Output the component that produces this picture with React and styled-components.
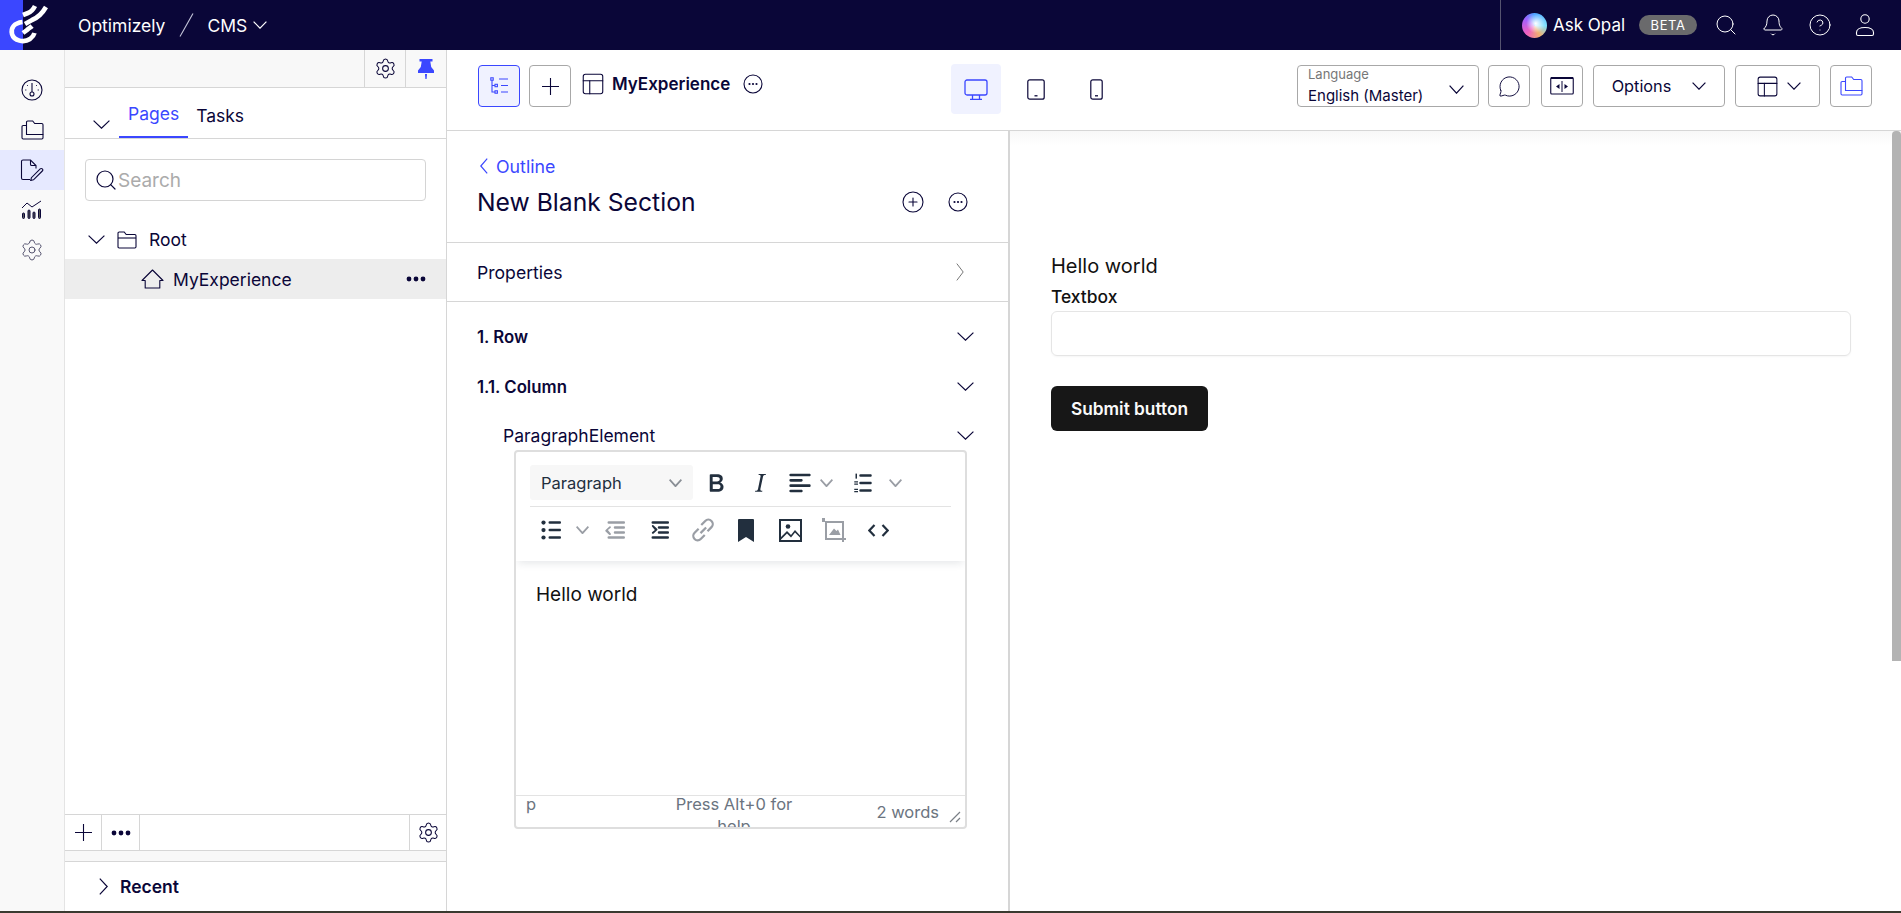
import React from 'react'
import styled, { createGlobalStyle } from 'styled-components'
import {
  Search, Bell, CircleHelp, Settings, MessageCircle, PanelsTopLeft, CirclePlus,
} from 'lucide-react'

const GlobalStyle = createGlobalStyle`
  html, body { margin: 0; padding: 0; height: 100%; overflow: hidden; background: #fff; }
  body { font-family: Inter, "Noto Sans", sans-serif; color: #0a0638; }
  * { box-sizing: border-box; }
`

const ink = '#0a0638'
const blue = '#3b47ff'
const line = '#d6d6d6'

const Page = styled.div`
  width: 1901px;
  height: 913px;
  display: flex;
  flex-direction: column;
  overflow: hidden;
  border-bottom: 2px solid #3a3a30;
`
const TopBar = styled.header`
  height: 50px;
  flex: none;
  background: ${ink};
  color: #fff;
  display: flex;
  align-items: center;
`
const LogoBox = styled.div`
  width: 78px;
  height: 50px;
  flex: none;
`
const BrandName = styled.span`
  font-size: 17.5px;
`
const Slash = styled.span`
  width: 42px;
  height: 50px;
  flex: none;
  display: flex;
  align-items: center;
  justify-content: center;
`
const Product = styled.span`
  font-size: 17.5px;
  display: flex;
  align-items: center;
  gap: 6px;
`
const TopRight = styled.div`
  margin-left: auto;
  height: 50px;
  width: 401px;
  border-left: 1px solid #55536f;
  padding-left: 21px;
  display: flex;
  align-items: center;
`
const Orb = styled.span`
  width: 25px;
  height: 25px;
  border-radius: 50%;
  background:
    radial-gradient(circle at 55% 42%, #fff 0, rgba(255, 255, 255, 0) 48%),
    conic-gradient(#4aa3ff, #7fe0ff 25%, #f0b070 42%, #f060c0 62%, #a060ff 85%, #4aa3ff);
`
const OpalLabel = styled.span`
  font-size: 17px;
  margin-left: 6px;
`
const Beta = styled.span`
  margin-left: 14px;
  width: 58px;
  height: 20px;
  border-radius: 10px;
  background: #6a6a6c;
  font-size: 13px;
  letter-spacing: 0.6px;
  display: flex;
  align-items: center;
  justify-content: center;
`
const TopIcons = styled.div`
  margin-left: 17px;
  display: flex;
  gap: 23px;
  align-items: center;
`
const Body = styled.div`
  flex: 1;
  min-height: 0;
  display: flex;
`
const Rail = styled.nav`
  width: 65px;
  flex: none;
  background: #f9f9f9;
  border-right: 1px solid #e4e4e4;
  padding-top: 20px;
  display: flex;
  flex-direction: column;
`
const RailItem = styled.div`
  height: 40px;
  display: flex;
  align-items: center;
  justify-content: center;
  background: ${p => (p.$active ? '#e6e9ff' : 'transparent')};
`
const TreePanel = styled.aside`
  width: 382px;
  flex: none;
  border-right: 1px solid ${line};
  display: flex;
  flex-direction: column;
`
const TreeHead = styled.div`
  height: 38px;
  flex: none;
  background: #f8f8f8;
  border-bottom: 1px solid ${line};
  display: flex;
  justify-content: flex-end;
`
const HeadCell = styled.div`
  width: 41px;
  border-left: 1px solid ${line};
  display: flex;
  align-items: center;
  justify-content: center;
`
const Tabs = styled.div`
  height: 51px;
  flex: none;
  border-bottom: 1px solid ${line};
  padding-left: 27px;
  display: flex;
  align-items: flex-end;
`
const TabChevron = styled.span`
  width: 27px;
  height: 50px;
  padding-top: 25px;
  padding-left: 1px;
`
const Tab = styled.div`
  padding: 0 ${p => (p.$active ? '9px' : '8px')};
  height: 50px;
  font-size: 17.5px;
  line-height: ${p => (p.$active ? '52px' : '56px')};
  color: ${p => (p.$active ? blue : ink)};
  border-bottom: ${p => (p.$active ? `2px solid ${blue}` : '0')};
`
const SearchBox = styled.div`
  margin: 20px 20px 0;
  height: 42px;
  border: 1px solid #d4d4d4;
  border-radius: 4px;
  display: flex;
  align-items: center;
  padding-left: 8px;
  color: #ababab;
  font-size: 19px;
  flex: none;
`
const RootRow = styled.div`
  height: 39px;
  margin-top: 19px;
  padding-left: 23px;
  display: flex;
  align-items: center;
  font-size: 17.5px;
  flex: none;
  gap: 12px;
`
const PageRow = styled.div`
  height: 40px;
  background: #ededed;
  padding: 0 20px 0 76px;
  display: flex;
  align-items: center;
  font-size: 17.5px;
  flex: none;
  gap: 9px;
`
const MoreDots = styled.span`
  margin-left: auto;
  display: flex;
`
const TreeFill = styled.div`
  flex: 1;
`
const TreeFoot = styled.div`
  height: 37px;
  flex: none;
  border-top: 1px solid ${line};
  border-bottom: 1px solid ${line};
  display: flex;
`
const FootCell = styled.div`
  width: ${p => (p.$wide ? '38px' : '37px')};
  border-right: ${p => (p.$end ? '0' : `1px solid ${line}`)};
  border-left: ${p => (p.$end ? `1px solid ${line}` : '0')};
  margin-left: ${p => (p.$end ? 'auto' : '0')};
  display: flex;
  align-items: center;
  justify-content: center;
`
const GreyStrip = styled.div`
  height: 11px;
  flex: none;
  background: #f8f8f8;
  border-bottom: 1px solid ${line};
`
const RecentRow = styled.div`
  height: 49px;
  flex: none;
  padding-left: 34px;
  display: flex;
  align-items: center;
  gap: 12px;
  font-size: 17.5px;
  font-weight: 600;
`
const Main = styled.main`
  flex: 1;
  min-width: 0;
  display: flex;
  flex-direction: column;
`
const ToolBar = styled.div`
  height: 81px;
  flex: none;
  border-bottom: 1px solid ${line};
  display: flex;
  padding: 15px 0 0 31px;
`
const ToolButton = styled.button`
  width: ${p => p.$w || 42}px;
  height: 42px;
  flex: none;
  margin-right: ${p => p.$gap ?? 0}px;
  background: ${p => (p.$active ? '#f0f2ff' : '#fff')};
  border: 1px solid ${p => (p.$active ? blue : '#a8a8a8')};
  border-radius: 4px;
  color: ${ink};
  font: 16.3px Inter, sans-serif;
  display: flex;
  align-items: center;
  justify-content: center;
  gap: ${p => p.$inner || 0}px;
  padding: 0;
`
const ExperienceName = styled.div`
  height: 42px;
  margin-left: 9px;
  width: 371px;
  flex: none;
  padding-bottom: 5px;
  display: flex;
  align-items: center;
  font-size: 17px;
  font-weight: 600;
  gap: 6px;
`
const NameDots = styled.span`
  display: flex;
  margin-left: 7px;
`
const DeviceTabs = styled.div`
  display: flex;
  margin-top: -1px;
  width: 346px;
  flex: none;
`
const DeviceTab = styled.div`
  width: 50px;
  height: 50px;
  margin-right: 10px;
  border-radius: 4px;
  background: ${p => (p.$active ? '#f0f2ff' : 'transparent')};
  display: flex;
  align-items: center;
  justify-content: center;
`
const LanguageBox = styled.div`
  width: 182px;
  height: 42px;
  flex: none;
  margin-right: 9px;
  border: 1px solid #a8a8a8;
  border-radius: 4px;
  padding: 0 10px;
  position: relative;
`
const LanguageLabel = styled.div`
  font-size: 13px;
  line-height: 14px;
  color: #777;
  margin-top: 1px;
`
const LanguageValue = styled.div`
  font-size: 15px;
  line-height: 19px;
  margin-top: 5px;
`
const LanguageChevron = styled.span`
  position: absolute;
  right: 14px;
  top: 19px;
  display: flex;
`
const Split = styled.div`
  flex: 1;
  min-height: 0;
  display: flex;
`
const OutlinePanel = styled.section`
  width: 563px;
  flex: none;
  border-right: 2px solid ${line};
`
const OutlineHead = styled.div`
  height: 112px;
  border-bottom: 1px solid ${line};
  padding: 24px 40px 0 30px;
`
const BackLink = styled.div`
  display: flex;
  align-items: center;
  color: ${blue};
  font-size: 17.8px;
  margin-left: 3px;
  gap: 8px;
  height: 22px;
`
const TitleRow = styled.div`
  display: flex;
  align-items: center;
  margin-top: 10px;
  gap: 23px;
  font-size: 24.7px;
  font-weight: 400;
`
const TitleText = styled.h1`
  font: inherit;
  margin: 0 auto 0 0;
`
const PropertiesRow = styled.div`
  height: 59px;
  border-bottom: 1px solid ${line};
  padding: 0 44px 0 30px;
  font-size: 17.6px;
  display: flex;
  align-items: center;
  justify-content: space-between;
`
const FoldRow = styled.div`
  height: ${p => p.$h || 49}px;
  padding: 0 34px 0 ${p => p.$indent || 30}px;
  font-size: ${p => (p.$bold ? '16.8px' : '17.5px')};
  font-weight: ${p => (p.$bold ? 600 : 400)};
  display: flex;
  align-items: center;
  justify-content: space-between;
`
const RowStack = styled.div`
  padding-top: 9px;
`
const Editor = styled.div`
  margin: -10px 0 0 67px;
  width: 453px;
  height: 379px;
  border: 2px solid #dedede;
  border-radius: 4px;
  display: flex;
  flex-direction: column;
  overflow: hidden;
`
const EditorHeader = styled.div`
  height: 109px;
  flex: none;
  padding: 13px 14px 0 14px;
  box-shadow: 0 4px 8px -2px rgba(34, 47, 62, 0.12);
`
const EditorRow = styled.div`
  height: ${p => (p.$first ? '42px' : '46px')};
  display: flex;
  align-items: ${p => (p.$first ? 'flex-start' : 'center')};
  border-bottom: ${p => (p.$first ? '1px solid #e3e3e3' : '0')};
`
const BlockSelect = styled.div`
  width: 163px;
  height: 35px;
  flex: none;
  background: #f7f7f7;
  border-radius: 3px;
  margin-right: 1px;
  padding: 0 11px;
  display: flex;
  align-items: center;
  justify-content: space-between;
  color: #222f3e;
  font-size: 16.5px;
`
const Tool = styled.span`
  width: ${p => p.$w || 44}px;
  margin-left: ${p => p.$ml || 0}px;
  height: ${p => (p.$mid ? '35px' : '36px')};
  flex: none;
  display: flex;
  align-items: center;
  justify-content: center;
  color: ${p => (p.$dim ? '#9a9ea5' : '#222f3e')};
`
const EditArea = styled.div`
  flex: 1;
  padding: 21px 20px 0;
  font-size: 19px;
  line-height: 26px;
  color: #111;
`
const StatusBar = styled.div`
  height: 32px;
  flex: none;
  border-top: 1px solid #e3e3e3;
  display: grid;
  grid-template-columns: 147px 122px 1fr;
  color: #6b7480;
  font-size: 16.5px;
  overflow: hidden;
  padding-left: 10px;
  position: relative;
`
const StatusPath = styled.span`
  line-height: 16px;
`
const StatusHelp = styled.span`
  text-align: center;
  line-height: 22px;
  margin-top: -3px;
`
const StatusWords = styled.span`
  text-align: right;
  padding: 5px 26px 0 0;
  line-height: 22px;
`
const ResizeGrip = styled.svg`
  position: absolute;
  right: 4px;
  bottom: 4px;
`
const Preview = styled.section`
  flex: 1;
  min-width: 0;
  position: relative;
  padding: 123px 50px 0 41px;
  background: linear-gradient(#f8f8f8, #fff 14px);
  color: #111;
`
const PreviewText = styled.p`
  margin: 0;
  font-size: 20px;
  line-height: 24px;
`
const FieldLabel = styled.label`
  display: block;
  margin-top: 9px;
  font-size: 17.4px;
  font-weight: 500;
  line-height: 20px;
`
const TextBox = styled.div`
  margin-top: 4px;
  height: 45px;
  border: 1px solid #e5e5e5;
  border-radius: 6px;
  box-shadow: 0 1px 2px rgba(0, 0, 0, 0.04);
`
const SubmitButton = styled.button`
  margin-top: 30px;
  display: block;
  width: 157px;
  height: 45px;
  border: 0;
  border-radius: 6px;
  background: #171717;
  color: #fafafa;
  font: 600 17.3px Inter, sans-serif;
`
const ScrollThumb = styled.div`
  position: absolute;
  top: 0;
  right: 0;
  width: 9px;
  height: 530px;
  background: #b3b3b3;
  border-radius: 4px 4px 0 0;
`

const ChevDown = ({ w = 17, h = 9, color = ink, sw = 1.2 }) => (
  <svg width={w} height={h} viewBox={`0 0 ${w} ${h}`} fill="none" stroke={color} strokeWidth={sw} style={{ flex: 'none' }}>
    <path d={`M.6.6 ${w / 2} ${h - 0.8} ${w - 0.6}.6`} />
  </svg>
)
const ChevRight = ({ w = 9, h = 17, color = ink, sw = 1.2 }) => (
  <svg width={w} height={h} viewBox={`0 0 ${w} ${h}`} fill="none" stroke={color} strokeWidth={sw} style={{ flex: 'none' }}>
    <path d={`M.8.6 ${w - 0.8} ${h / 2} .8 ${h - 0.6}`} />
  </svg>
)
const ChevLeft = ({ w = 8, h = 16, color = blue, sw = 1.2 }) => (
  <svg width={w} height={h} viewBox={`0 0 ${w} ${h}`} fill="none" stroke={color} strokeWidth={sw} style={{ flex: 'none' }}>
    <path d={`M${w - 0.8}.6 .8 ${h / 2} ${w - 0.8} ${h - 0.6}`} />
  </svg>
)
const Cross = ({ size = 17, color = ink }) => (
  <svg width={size} height={size} viewBox={`0 0 ${size} ${size}`} stroke={color} strokeWidth="1.1">
    <path d={`M0 ${size / 2}H${size}M${size / 2} 0V${size}`} />
  </svg>
)

const DotsGlyph = () => (
  <svg width="20" height="6" viewBox="0 0 20 6"><circle cx="3" cy="3" r="2.4" fill={ink} /><circle cx="10" cy="3" r="2.4" fill={ink} /><circle cx="17" cy="3" r="2.4" fill={ink} /></svg>
)

const Logo = () => (
  <svg width="78" height="50" viewBox="0 0 78 50">
    <rect width="23" height="50" fill={blue} />
    <g fill="none" stroke="#fff" strokeWidth="4.6" strokeLinecap="butt">
      <path d="M22.5 22 C 14 23, 10.5 28, 12 34 C 14 41, 24 43, 30 39 C 32.5 37, 34 35, 34.5 33" />
      <path d="M23 15 L 28 13 C 31 12, 33 10, 35 6" />
      <path d="M25 24 L 32 20 C 37 18, 42 14, 46 7" />
      <path d="M23 33 L 27 30 C 29 28, 31 27, 32 26" />
    </g>
  </svg>
)

const CircleDots = () => (
  <svg width="20" height="20" viewBox="0 0 20 20" fill="none"><circle cx="10" cy="10" r="9" stroke={ink} strokeWidth="1.1" /><circle cx="6.5" cy="10" r="1.1" fill={ink} /><circle cx="10" cy="10" r="1.1" fill={ink} /><circle cx="13.5" cy="10" r="1.1" fill={ink} /></svg>
)
const UserIcon = () => (
  <svg width="20" height="24" viewBox="0 0 20 24" fill="none" stroke="#fff" strokeWidth="1.1"><circle cx="10" cy="6" r="4.2" /><path d="M3 22.5 h14 c1 0 1.5-.5 1.5-1.5 v-1.5 c0-3-3-5-8.5-5 s-8.5 2-8.5 5 v1.5 c0 1 .5 1.5 1.5 1.5z" /></svg>
)
const SplitIcon = () => (
  <svg width="24" height="18" viewBox="0 0 24 18" fill="none" stroke={ink}><rect x=".75" y="1" width="22.5" height="16" rx="1" strokeWidth="1.1" /><path d="M.7 1h22.6" strokeWidth="2" /><path d="M12 4v11" strokeWidth="1" /><path d="M9.5 6.9 6 9.5l3.5 2.6zM14.5 6.9 18 9.5l-3.5 2.6z" fill={ink} stroke="none" /></svg>
)
const ChartIcon = () => (
  <svg width="22" height="20" viewBox="0 0 22 20" fill="none" stroke={ink} strokeWidth="1"><path d="M1 8 6 3l5 4 9-6" /><rect x="1.5" y="13" width="2" height="5.5" rx="1" fill="#555" /><rect x="7" y="10" width="2" height="8.5" rx="1" fill="#555" /><rect x="12" y="12" width="2" height="6.5" rx="1" fill="#555" /><rect x="17.5" y="9" width="2" height="9.5" rx="1" fill="#555" /></svg>
)
const GaugeIcon = () => (
  <svg width="22" height="22" viewBox="0 0 22 22" fill="none" stroke={ink} strokeWidth="1.1">
    <circle cx="11" cy="11" r="10" />
    <path d="M11 4v9" />
    <circle cx="11" cy="15" r="2" />
    <path d="M4 11h1.4M16.6 11H18M6 6l1 1M16 6l-1 1" strokeWidth=".8" />
  </svg>
)
const FoldersIcon = ({ color = ink, w = 23, h = 20 }) => (
  <svg width={w} height={h} viewBox="0 0 23 20" fill="none" stroke={color} strokeWidth="1.1">
    <path d="M5.5 14.5V2.2c0-.7.5-1.2 1.2-1.2h5l2 2.5h7c.7 0 1.3.5 1.3 1.2v9.8z" />
    <path d="M5.5 5.5H2.2C1.5 5.5 1 6 1 6.7v11.1c0 .7.5 1.2 1.2 1.2h18.6c.7 0 1.2-.5 1.2-1.2v-3.3" />
  </svg>
)
const FilePencilIcon = () => (
  <svg width="24" height="22" viewBox="0 0 24 22" fill="none" stroke={ink} strokeWidth="1.1">
    <path d="M10 20.5H3A1.5 1.5 0 0 1 1.5 19V2.5A1.5 1.5 0 0 1 3 1h7.5L16 6.5v3" />
    <path d="M10.5 1v4.2c0 .7.6 1.3 1.3 1.3H16" />
    <path d="M13.5 20.8l-2.8.7.7-2.8 8.8-8.8a1.4 1.4 0 0 1 2.1 2.1z" />
  </svg>
)
const HomeIcon = () => (
  <svg width="23" height="20" viewBox="0 0 23 20" fill="none" stroke={ink} strokeWidth="1.1" strokeLinejoin="round">
    <path d="M11.5 1 1 11.5h3.2V19h14.6v-7.5H22z" />
  </svg>
)
const RootFolderIcon = () => (
  <svg width="20" height="18" viewBox="0 0 20 18" fill="none" stroke={ink} strokeWidth="1.1">
    <path d="M1 2.2C1 1.5 1.5 1 2.2 1h5l2 2.5h8.6c.7 0 1.2.5 1.2 1.2v11.1c0 .7-.5 1.2-1.2 1.2H2.2c-.7 0-1.2-.5-1.2-1.2z" />
    <path d="M1 7h18" />
  </svg>
)
const PinIcon = () => (
  <svg width="16" height="20" viewBox="0 0 16 20" fill={blue}>
    <path d="M1.5 0h13v2.4h-2.2l.9 5.6 2.8 3.6V14H0v-2.4L2.8 8l.9-5.6H1.5z" />
    <path d="M7 15h2l-.4 5H7.4z" />
  </svg>
)
const OutlineTreeIcon = () => (
  <svg width="19" height="18" viewBox="0 0 19 18" fill="none" stroke={blue} strokeWidth="1.1">
    <rect x=".8" y=".8" width="2.4" height="2.4" />
    <rect x="5" y="7.3" width="2.4" height="2.4" />
    <rect x="5" y="13.8" width="2.4" height="2.4" />
    <path d="M2 3.2V15h3M2 8.5h3" />
    <path d="M9 2h9M11 8.5h7M11 15h7" />
  </svg>
)
const MonitorIcon = () => (
  <svg width="24" height="21" viewBox="0 0 24 21" fill="none" stroke={blue} strokeWidth="1.3">
    <rect x="1" y="1" width="22" height="15" rx="2" />
    <path d="M8.5 16v4M15.5 16v4M6 20.3h12" />
  </svg>
)
const TabletIcon = () => (
  <svg width="18" height="21" viewBox="0 0 18 21" fill="none" stroke={ink} strokeWidth="1.2">
    <rect x=".8" y=".8" width="16.4" height="19.4" rx="2" />
    <path d="M7.5 16.8h3" strokeWidth="1.3" />
  </svg>
)
const PhoneIcon = () => (
  <svg width="13" height="21" viewBox="0 0 13 21" fill="none" stroke={ink} strokeWidth="1.2">
    <rect x=".8" y=".8" width="11.4" height="19.4" rx="2" />
    <path d="M5 16.8h3" strokeWidth="1.3" />
  </svg>
)

const BoldIcon = () => (
  <svg width="30" height="30" viewBox="0 0 24 24" fill="currentColor"><path d="M7.8 19c-.3 0-.5 0-.6-.2l-.2-.5V5.7c0-.2 0-.4.2-.5l.6-.2h5c1.5 0 2.7.3 3.5 1 .7.6 1.1 1.4 1.1 2.5a3 3 0 0 1-.6 1.9c-.4.6-1 1-1.6 1.2.4.1.9.3 1.3.6s.8.7 1 1.2c.4.4.5 1 .5 1.6 0 1.3-.4 2.3-1.3 3-.8.7-2.1 1-3.8 1H7.8zm5-8.3c.6 0 1.2-.1 1.6-.5.4-.3.6-.7.6-1.3 0-1.1-.8-1.7-2.4-1.7H9.3v3.5h3.4zm.5 6c.7 0 1.3-.1 1.7-.4.4-.4.6-.9.6-1.5s-.2-1-.7-1.4c-.4-.3-1-.4-2-.4H9.4v3.8h4z" /></svg>
)
const ItalicIcon = () => (
  <svg width="30" height="30" viewBox="0 0 24 24" fill="currentColor"><path d="M16.7 4.7l-.1.9h-.3c-.6 0-1 0-1.4.3-.3.3-.4.6-.5 1.1l-2.1 9.8v.6c0 .5.4.8 1.4.8h.2l-.2.8H8l.2-.8h.2c1.1 0 1.8-.5 2-1.5l2-9.8.1-.5c0-.6-.4-.8-1.4-.8h-.3l.2-.9h5.8z" /></svg>
)
const AlignIcon = () => (
  <svg width="32" height="32" viewBox="0 0 24 24" fill="currentColor"><path d="M5 5h14c.6 0 1 .4 1 1s-.4 1-1 1H5a1 1 0 1 1 0-2zm0 4h8c.6 0 1 .4 1 1s-.4 1-1 1H5a1 1 0 1 1 0-2zm0 8h8c.6 0 1 .4 1 1s-.4 1-1 1H5a1 1 0 0 1 0-2zm0-4h14c.6 0 1 .4 1 1s-.4 1-1 1H5a1 1 0 0 1 0-2z" /></svg>
)
const NumListIcon = () => (
  <svg width="30" height="30" viewBox="0 0 24 24" fill="currentColor"><path d="M10 17h8c.6 0 1 .4 1 1s-.4 1-1 1h-8a1 1 0 0 1 0-2zm0-6h8c.6 0 1 .4 1 1s-.4 1-1 1h-8a1 1 0 0 1 0-2zm0-6h8c.6 0 1 .4 1 1s-.4 1-1 1h-8a1 1 0 1 1 0-2z" /><rect x="6" y="4.5" width="1.2" height="4" /><rect x="5" y="10.6" width="3" height="1" /><rect x="5" y="12.4" width="3" height="1" /><rect x="5" y="16.6" width="3" height="1" /><rect x="5" y="18.4" width="3" height="1" /></svg>
)
const BulListIcon = () => (
  <svg width="30" height="30" viewBox="0 0 24 24" fill="currentColor"><path d="M11 5h8c.6 0 1 .4 1 1s-.4 1-1 1h-8a1 1 0 0 1 0-2zm0 6h8c.6 0 1 .4 1 1s-.4 1-1 1h-8a1 1 0 0 1 0-2zm0 6h8c.6 0 1 .4 1 1s-.4 1-1 1h-8a1 1 0 0 1 0-2z" /><circle cx="6" cy="6" r="1.7" /><circle cx="6" cy="12" r="1.7" /><circle cx="6" cy="18" r="1.7" /></svg>
)
const OutdentIcon = () => (
  <svg width="30" height="30" viewBox="0 0 24 24" fill="currentColor"><path d="M7 5h12c.6 0 1 .4 1 1s-.4 1-1 1H7a1 1 0 1 1 0-2zm5 4h7c.6 0 1 .4 1 1s-.4 1-1 1h-7a1 1 0 0 1 0-2zm0 4h7c.6 0 1 .4 1 1s-.4 1-1 1h-7a1 1 0 0 1 0-2zm-5 4h12a1 1 0 0 1 0 2H7a1 1 0 0 1 0-2zm1.6-2.2a.8.8 0 0 1-1.1 1.1l-3-2.8a.8.8 0 0 1 0-1.2l3-2.8a.8.8 0 0 1 1.1 1.1L6.3 12z" /></svg>
)
const IndentIcon = () => (
  <svg width="30" height="30" viewBox="0 0 24 24" fill="currentColor"><path d="M7 5h12c.6 0 1 .4 1 1s-.4 1-1 1H7a1 1 0 1 1 0-2zm5 4h7c.6 0 1 .4 1 1s-.4 1-1 1h-7a1 1 0 0 1 0-2zm0 4h7c.6 0 1 .4 1 1s-.4 1-1 1h-7a1 1 0 0 1 0-2zm-5 4h12a1 1 0 0 1 0 2H7a1 1 0 0 1 0-2zm-.6-7.8a.8.8 0 0 1 1.1-1.1l3 2.8a.8.8 0 0 1 0 1.2l-3 2.8a.8.8 0 0 1-1.1-1.1L8.7 12z" /></svg>
)
const LinkIcon = () => (
  <svg width="30" height="30" viewBox="0 0 24 24" fill="none" stroke="currentColor" strokeWidth="1.8"><path d="M10 14.5 14.5 10" /><path d="M8.5 11 5.3 14.2a3.5 3.5 0 0 0 4.9 5L13.4 16" /><path d="M10.6 8 13.8 4.8a3.5 3.5 0 0 1 5 4.9L15.6 13" /></svg>
)
const BookmarkIcon = () => (
  <svg width="16" height="23" viewBox="0 0 16 23" fill="currentColor"><path d="M0 1a1 1 0 0 1 1-1h14a1 1 0 0 1 1 1v22l-8-5-8 5z" /></svg>
)
const ImageIcon = () => (
  <svg width="23" height="23" viewBox="0 0 23 23" fill="currentColor"><path fillRule="evenodd" d="M0 0h23v23H0zM2 2v19h19V2z" /><circle cx="9" cy="7.5" r="2.3" /><path d="M2 18 8 12l4 4 4-5 5 5.5v2l-5-5-4 5-4-4-6 6z" /></svg>
)
const CropIcon = () => (
  <svg width="24" height="24" viewBox="0 0 24 24" fill="currentColor"><path d="M0 0h3v3h19v17h2v2h-2v2h-2v-2H3V4H0zM5 5v15h15V5z" /><path d="M7 17l5-6.5 2.5 2.5 1.5-1.5 2.5 5.5z" /></svg>
)
const CodeIcon = () => (
  <svg width="21" height="13" viewBox="0 0 21 13" fill="none" stroke="currentColor" strokeWidth="2.2"><path d="M6.5 1 1.3 6.5l5.2 5.5M14.5 1l5.2 5.5-5.2 5.5" /></svg>
)

export default function App() {
  return (
    <>
      <GlobalStyle />
      <Page>
        <TopBar>
          <LogoBox><Logo /></LogoBox>
          <BrandName>Optimizely</BrandName>
          <Slash>
            <svg width="15" height="24" viewBox="0 0 15 24"><path d="M1 23.5 14 .5" stroke="#c5c6da" strokeWidth="1.1" /></svg>
          </Slash>
          <Product>CMS <ChevDown w={14} h={8} color="#fff" /></Product>
          <TopRight>
            <Orb />
            <OpalLabel>Ask Opal</OpalLabel>
            <Beta>BETA</Beta>
            <TopIcons>
              <Search size={24} strokeWidth={1} />
              <Bell size={24} strokeWidth={1} />
              <CircleHelp size={24} strokeWidth={1} />
              <UserIcon />
            </TopIcons>
          </TopRight>
        </TopBar>
        <Body>
          <Rail>
            <RailItem><GaugeIcon /></RailItem>
            <RailItem><FoldersIcon /></RailItem>
            <RailItem $active><FilePencilIcon /></RailItem>
            <RailItem><ChartIcon /></RailItem>
            <RailItem><Settings size={24} strokeWidth={1} color="#55536f" /></RailItem>
          </Rail>
          <TreePanel>
            <TreeHead>
              <HeadCell><Settings size={23} strokeWidth={1.1} color={ink} /></HeadCell>
              <HeadCell><PinIcon /></HeadCell>
            </TreeHead>
            <Tabs>
              <TabChevron><ChevDown /></TabChevron>
              <Tab $active>Pages</Tab>
              <Tab>Tasks</Tab>
            </Tabs>
            <SearchBox>
              <Search size={24} strokeWidth={1.2} color={ink} />
              Search
            </SearchBox>
            <RootRow>
              <ChevDown />
              <RootFolderIcon />
              Root
            </RootRow>
            <PageRow>
              <HomeIcon />
              MyExperience
              <MoreDots><DotsGlyph /></MoreDots>
            </PageRow>
            <TreeFill />
            <TreeFoot>
              <FootCell><Cross /></FootCell>
              <FootCell $wide><DotsGlyph /></FootCell>
              <FootCell $end><Settings size={23} strokeWidth={1.1} color={ink} /></FootCell>
            </TreeFoot>
            <GreyStrip />
            <RecentRow>
              <ChevRight />
              Recent
            </RecentRow>
          </TreePanel>
          <Main>
            <ToolBar>
              <ToolButton $active $gap={9}><OutlineTreeIcon /></ToolButton>
              <ToolButton><Cross /></ToolButton>
              <ExperienceName>
                <PanelsTopLeft size={26} strokeWidth={1} color={ink} />
                MyExperience
                <NameDots><CircleDots /></NameDots>
              </ExperienceName>
              <DeviceTabs>
                <DeviceTab $active><MonitorIcon /></DeviceTab>
                <DeviceTab><TabletIcon /></DeviceTab>
                <DeviceTab><PhoneIcon /></DeviceTab>
              </DeviceTabs>
              <LanguageBox>
                <LanguageLabel>Language</LanguageLabel>
                <LanguageValue>English (Master)</LanguageValue>
                <LanguageChevron><ChevDown w={15} h={9} /></LanguageChevron>
              </LanguageBox>
              <ToolButton $gap={11}><MessageCircle size={23} strokeWidth={1} /></ToolButton>
              <ToolButton $gap={10}><SplitIcon /></ToolButton>
              <ToolButton $w={132} $gap={10} $inner={21}>Options <ChevDown w={14} h={8} /></ToolButton>
              <ToolButton $w={85} $gap={10} $inner={7}><PanelsTopLeft size={25} strokeWidth={1} /> <ChevDown w={14} h={8} /></ToolButton>
              <ToolButton><FoldersIcon color={blue} /></ToolButton>
            </ToolBar>
            <Split>
              <OutlinePanel>
                <OutlineHead>
                  <BackLink><ChevLeft /> Outline</BackLink>
                  <TitleRow>
                    <TitleText>New Blank Section</TitleText>
                    <CirclePlus size={24} strokeWidth={1.1} color={ink} />
                    <CircleDots />
                  </TitleRow>
                </OutlineHead>
                <PropertiesRow>
                  Properties
                  <ChevRight w={8} h={18} color="#777" sw={1} />
                </PropertiesRow>
                <RowStack>
                  <FoldRow $bold $h={51}>1. Row <ChevDown /></FoldRow>
                  <FoldRow $bold>1.1. Column <ChevDown /></FoldRow>
                  <FoldRow $indent={56}>ParagraphElement <ChevDown /></FoldRow>
                </RowStack>
                <Editor>
                  <EditorHeader>
                    <EditorRow $first>
                      <BlockSelect>Paragraph <ChevDown w={13} h={8} color="#8a8f96" sw={1.8} /></BlockSelect>
                      <Tool $mid><BoldIcon /></Tool>
                      <Tool $mid><ItalicIcon /></Tool>
                      <Tool $mid $w={36}><AlignIcon /></Tool>
                      <Tool $mid $w={16} $dim><ChevDown w={13} h={8} color="#9a9ea5" sw={1.8} /></Tool>
                      <Tool $mid $ml={7}><NumListIcon /></Tool>
                      <Tool $mid $w={20} $dim><ChevDown w={13} h={8} color="#9a9ea5" sw={1.8} /></Tool>
                    </EditorRow>
                    <EditorRow>
                      <Tool $w={42}><BulListIcon /></Tool>
                      <Tool $w={20} $dim><ChevDown w={13} h={8} color="#9a9ea5" sw={1.8} /></Tool>
                      <Tool $w={46} $dim><OutdentIcon /></Tool>
                      <Tool $w={42}><IndentIcon /></Tool>
                      <Tool $w={46} $dim><LinkIcon /></Tool>
                      <Tool $w={40}><BookmarkIcon /></Tool>
                      <Tool $w={48}><ImageIcon /></Tool>
                      <Tool $w={40} $dim><CropIcon /></Tool>
                      <Tool $w={48}><CodeIcon /></Tool>
                    </EditorRow>
                  </EditorHeader>
                  <EditArea>Hello world</EditArea>
                  <StatusBar>
                    <StatusPath>p</StatusPath>
                    <StatusHelp>Press Alt+0 for help</StatusHelp>
                    <StatusWords>2 words</StatusWords>
                    <ResizeGrip width="12" height="12" viewBox="0 0 12 12" stroke="#7a7f86" strokeWidth="1.2"><path d="M1 11 11 1M7 11l4-4" /></ResizeGrip>
                  </StatusBar>
                </Editor>
              </OutlinePanel>
              <Preview>
                <PreviewText>Hello world</PreviewText>
                <FieldLabel>Textbox</FieldLabel>
                <TextBox />
                <SubmitButton>Submit button</SubmitButton>
                <ScrollThumb />
              </Preview>
            </Split>
          </Main>
        </Body>
      </Page>
    </>
  )
}
